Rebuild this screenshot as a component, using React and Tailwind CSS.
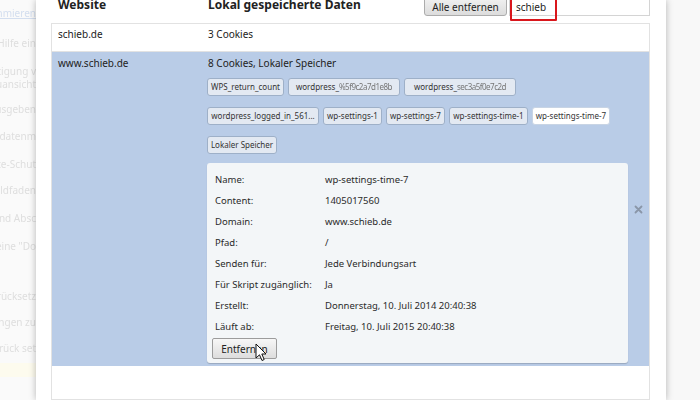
import React from "react";

const sideLines = [
  { t: "Programmieren", h: "h-[30px]", c: "text-[#d3deef] underline" },
  { t: "Hilfe ein", h: "h-[28px]", c: "" },
  { t: "Bestätigung v", h: "h-[13px]", c: "" },
  { t: "Vorschauansicht", h: "h-[25px]", c: "" },
  { t: "Ausgeben", h: "h-[27px]", c: "" },
  { t: "Metadatenm", h: "h-[28px]", c: "" },
  { t: "Seite-Schut", h: "h-[26px]", c: "" },
  { t: "Bildfaden", h: "h-[28px]", c: "" },
  { t: "Und Absc", h: "h-[28px]", c: "" },
  { t: "Keine \"Do", h: "h-[50px]", c: "" },
  { t: "Zurücksetz", h: "h-[26px]", c: "" },
  { t: "Einstellungen zu", h: "h-[26px]", c: "" },
  { t: "Zurück set", h: "h-[26px]", c: "" },
];

const Chip = ({ w, active, children }) => (
  <div
    className={`${w} h-[18px] shrink-0 rounded-[3px] border border-[#9eb0c8] flex items-center justify-center text-[8px] text-[#333] whitespace-nowrap overflow-hidden ${
      active ? "bg-white border-[#c8d4e4]" : "bg-[#e3e9f2]"
    }`}
  >
    {children}
  </div>
);

const Blurred = ({ children }) => (
  <span className="blur-[0.7px] text-[#777] tracking-[-0.5px]">{children}</span>
);

const details = [
  ["Name:", "wp-settings-time-7"],
  ["Content:", "1405017560"],
  ["Domain:", "www.schieb.de"],
  ["Pfad:", "/"],
  ["Senden für:", "Jede Verbindungsart"],
  ["Für Skript zugänglich:", "Ja"],
  ["Erstellt:", "Donnerstag, 10. Juli 2014 20:40:38"],
  ["Läuft ab:", "Freitag, 10. Juli 2015 20:40:38"],
];

export default function App() {
  return (
    <div className="w-[700px] h-[400px] flex overflow-hidden bg-[#fafafa] font-['Noto_Sans',sans-serif] text-[#222]">
      {/* faded page behind the dialog */}
      <div className="w-[36px] shrink-0 flex flex-col items-end overflow-hidden pt-[8px] text-[10px] leading-[11px] text-[#dedede] blur-[0.5px]">
        {sideLines.map((l, i) => (
          <div key={i} className={`${l.h} whitespace-nowrap ${l.c}`}>
            {l.t}
          </div>
        ))}
        <div className="mt-[-6px] w-full h-[14px] bg-[#fdfbee]"></div>
      </div>

      {/* dialog */}
      <div className="w-[630px] shrink-0 bg-white shadow-[0_0_7px_rgba(0,0,0,0.28)] flex flex-col pl-[15px] pr-[16px] relative z-10">
        <div className="h-[23px] flex items-start relative shrink-0">
          <div className="w-[157px] pl-[7px] -mt-[2px] text-[12px] leading-[14px] font-bold">Website</div>
          <div className="flex-1 -mt-[2px] text-[12px] leading-[14px] font-bold">Lokal gespeicherte Daten</div>
          <div className="w-[83px] h-[21px] -mt-[5px] border border-[#acacac] rounded-b-[3px] bg-gradient-to-b from-[#f4f4f4] to-[#dcdcdc] flex items-center justify-center text-[10px] leading-none pt-[3px] text-[#222]">
            Alle entfernen
          </div>
          <div className="ml-[2px] w-[141px] h-[21px] -mt-[5px] border border-[#d4d4d4] bg-white flex items-center pl-[6px] pt-[3px] text-[10px] leading-none">
            schieb
          </div>
          <div className="absolute left-[459px] -top-[4px] w-[47px] h-[25px] border-2 border-[#d9161c] rounded-[1px]"></div>
        </div>

        <div className="flex-1 border border-[#e2e2e2] flex flex-col">
          <div className="h-[28px] border-b border-[#e2e2e2] flex text-[10px] leading-[16px] shrink-0">
            <div className="w-[155px] pl-[6px] pt-[2px]">schieb.de</div>
            <div className="pl-[1px] pt-[2px]">3 Cookies</div>
          </div>

          <div className="flex bg-[#b9cce7] text-[10px] leading-[16px] shrink-0">
            <div className="w-[155px] pl-[6px] pt-[3px]">www.schieb.de</div>
            <div className="w-[421px] pt-[3px] pb-[3px] flex flex-col">
              <div className="pl-[1px]">8 Cookies, Lokaler Speicher</div>
              <div className="mt-[7px] flex flex-col gap-[11px]">
                <div className="flex gap-[4px]">
                  <Chip w="w-[77px]">WPS_return_count</Chip>
                  <Chip w="w-[112px]">
                    wordpress_<Blurred>%5f9c2a7d1e8b</Blurred>
                  </Chip>
                  <Chip w="w-[112px]">
                    wordpress_<Blurred>sec3a5f0e7c2d</Blurred>
                  </Chip>
                </div>
                <div className="flex gap-[4px]">
                  <Chip w="w-[112px]">wordpress_logged_in_561...</Chip>
                  <Chip w="w-[59px]">wp-settings-1</Chip>
                  <Chip w="w-[59px]">wp-settings-7</Chip>
                  <Chip w="w-[79px]">wp-settings-time-1</Chip>
                  <Chip w="w-[78px]" active>
                    wp-settings-time-7
                  </Chip>
                </div>
                <div className="flex">
                  <Chip w="w-[70px]">Lokaler Speicher</Chip>
                </div>
              </div>

              <div className="mt-[9px] bg-[#f3f6f8] rounded-[3px] shadow-[0_1px_1px_rgba(0,0,0,0.18)] pt-[6px] pb-[4px] flex flex-col text-[9.5px] leading-[21px] text-[#2a2a2a]">
                {details.map(([k, v]) => (
                  <div key={k} className="flex h-[21px]">
                    <div className="w-[118px] pl-[8px] whitespace-nowrap">{k}</div>
                    <div className="whitespace-nowrap">{v}</div>
                  </div>
                ))}
                <div className="relative ml-[5px] mt-[1px] w-[65px] h-[21px] border border-[#9c9c9c] rounded-[2px] bg-gradient-to-b from-[#f7f7f7] to-[#dddddd] flex items-center justify-center text-[10px] leading-none text-[#222]">
                  Entfernen
                  <svg className="absolute left-[42px] top-[4px]" width="12" height="19" viewBox="0 0 12 19">
                    <path d="M1 1 L1 15 L4.5 11.8 L7 17.5 L9.2 16.5 L6.8 11 L11 11 Z" fill="#fff" stroke="#111" strokeWidth="1" strokeLinejoin="round" />
                  </svg>
                </div>
              </div>
            </div>
            <div className="flex-1 flex items-center justify-center">
              <svg width="9" height="9" viewBox="0 0 9 9">
                <path d="M1.5 1.5 L7.5 7.5 M7.5 1.5 L1.5 7.5" stroke="#8a96a8" strokeWidth="1.8" strokeLinecap="round" />
              </svg>
            </div>
          </div>
          <div className="flex-1"></div>
        </div>
      </div>

      {/* faded page right */}
      <div className="flex-1 bg-[#f8f8f8]"></div>
    </div>
  );
}
